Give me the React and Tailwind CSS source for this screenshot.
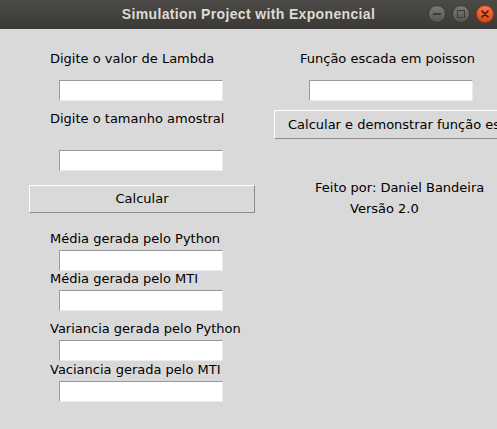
import React from 'react';

const Entry = ({ className = '' }) => (
  <div
    className={`h-[21px] w-[164px] bg-white border-t border-l border-[#9a9a9a] border-b-[#ececec] border-r-[#ececec] border-b border-r ${className}`}
  />
);

const Label = ({ children, className = '' }) => (
  <div className={`h-4 leading-4 whitespace-nowrap ${className}`}>{children}</div>
);

const TitleBar = () => (
  <div className="relative h-[29px] flex items-center justify-center bg-gradient-to-b from-[#4b4a46] to-[#3b3a36]">
    <span className="text-[14px] font-bold text-[#dfdbd2] font-['Liberation_Sans',sans-serif] tracking-[0.35px]">
      Simulation Project with Exponencial
    </span>
    {/* window controls */}
    <div className="absolute right-[3px] top-[5px] flex gap-[6px]">
      <div className="w-[18px] h-[18px] rounded-full bg-gradient-to-b from-[#7b7a75] to-[#575652] border border-[#3a3935] flex items-center justify-center">
        <div className="w-[8px] h-[2px] bg-[#3c3b37]" />
      </div>
      <div className="w-[18px] h-[18px] rounded-full bg-gradient-to-b from-[#7b7a75] to-[#575652] border border-[#3a3935] flex items-center justify-center">
        <div className="w-[8px] h-[8px] border-[1.5px] border-[#3c3b37]" />
      </div>
      <div className="w-[18px] h-[18px] rounded-full bg-gradient-to-b from-[#f3784a] to-[#dd4814] border border-[#a5370f] flex items-center justify-center">
        <svg width="8" height="8" viewBox="0 0 8 8">
          <path d="M1 1 L7 7 M7 1 L1 7" stroke="#3c1a0c" strokeWidth="1.6" strokeLinecap="round" />
        </svg>
      </div>
    </div>
  </div>
);

export default function App() {
  return (
    <div className="w-[497px] h-[429px] overflow-hidden bg-[#d9d9d9] font-['DejaVu_Sans',sans-serif] text-[13px] text-black">
      <TitleBar />
      <div className="flex">
        {/* left column */}
        <div className="w-[255px] shrink-0 flex flex-col">
          <Label className="mt-[22px] pl-[50px]">Digite o valor de Lambda</Label>
          <Entry className="mt-[13px] ml-[59px]" />
          <Label className="mt-[10px] pl-[50px]">Digite o tamanho amostral</Label>
          <Entry className="mt-[23px] ml-[59px]" />
          <button className="mt-[14px] ml-[29px] w-[226px] h-[28px] border border-t-white border-l-white border-b-[#8a8a8a] border-r-[#8a8a8a] bg-[#d9d9d9] text-center">
            Calcular
          </button>
          <Label className="mt-[18px] pl-[50px]">Média gerada pelo Python</Label>
          <Entry className="mt-[3px] ml-[59px]" />
          <Label className="pl-[50px]">Média gerada pelo MTI</Label>
          <Entry className="mt-[3px] ml-[59px]" />
          <Label className="mt-[10px] pl-[50px]">Variancia gerada pelo Python</Label>
          <Entry className="mt-[3px] ml-[59px]" />
          <Label className="mt-[1px] pl-[50px]">Vaciancia gerada pelo MTI</Label>
          <Entry className="mt-[3px] ml-[59px]" />
        </div>
        {/* right column */}
        <div className="flex flex-col flex-1 min-w-0">
          <Label className="mt-[22px] pl-[45px]">Função escada em poisson</Label>
          <Entry className="mt-[13px] ml-[54px]" />
          <button className="mt-[9px] ml-[19px] w-[260px] h-[29px] shrink-0 border border-t-white border-l-white border-b-[#8a8a8a] border-r-[#8a8a8a] bg-[#d9d9d9] text-left pl-[13px] whitespace-nowrap">
            Calcular e demonstrar função escada
          </button>
          <Label className="mt-[41px] pl-[60px]">Feito por: Daniel Bandeira</Label>
          <Label className="mt-[5px] pl-[95px]">Versão 2.0</Label>
        </div>
      </div>
    </div>
  );
}
